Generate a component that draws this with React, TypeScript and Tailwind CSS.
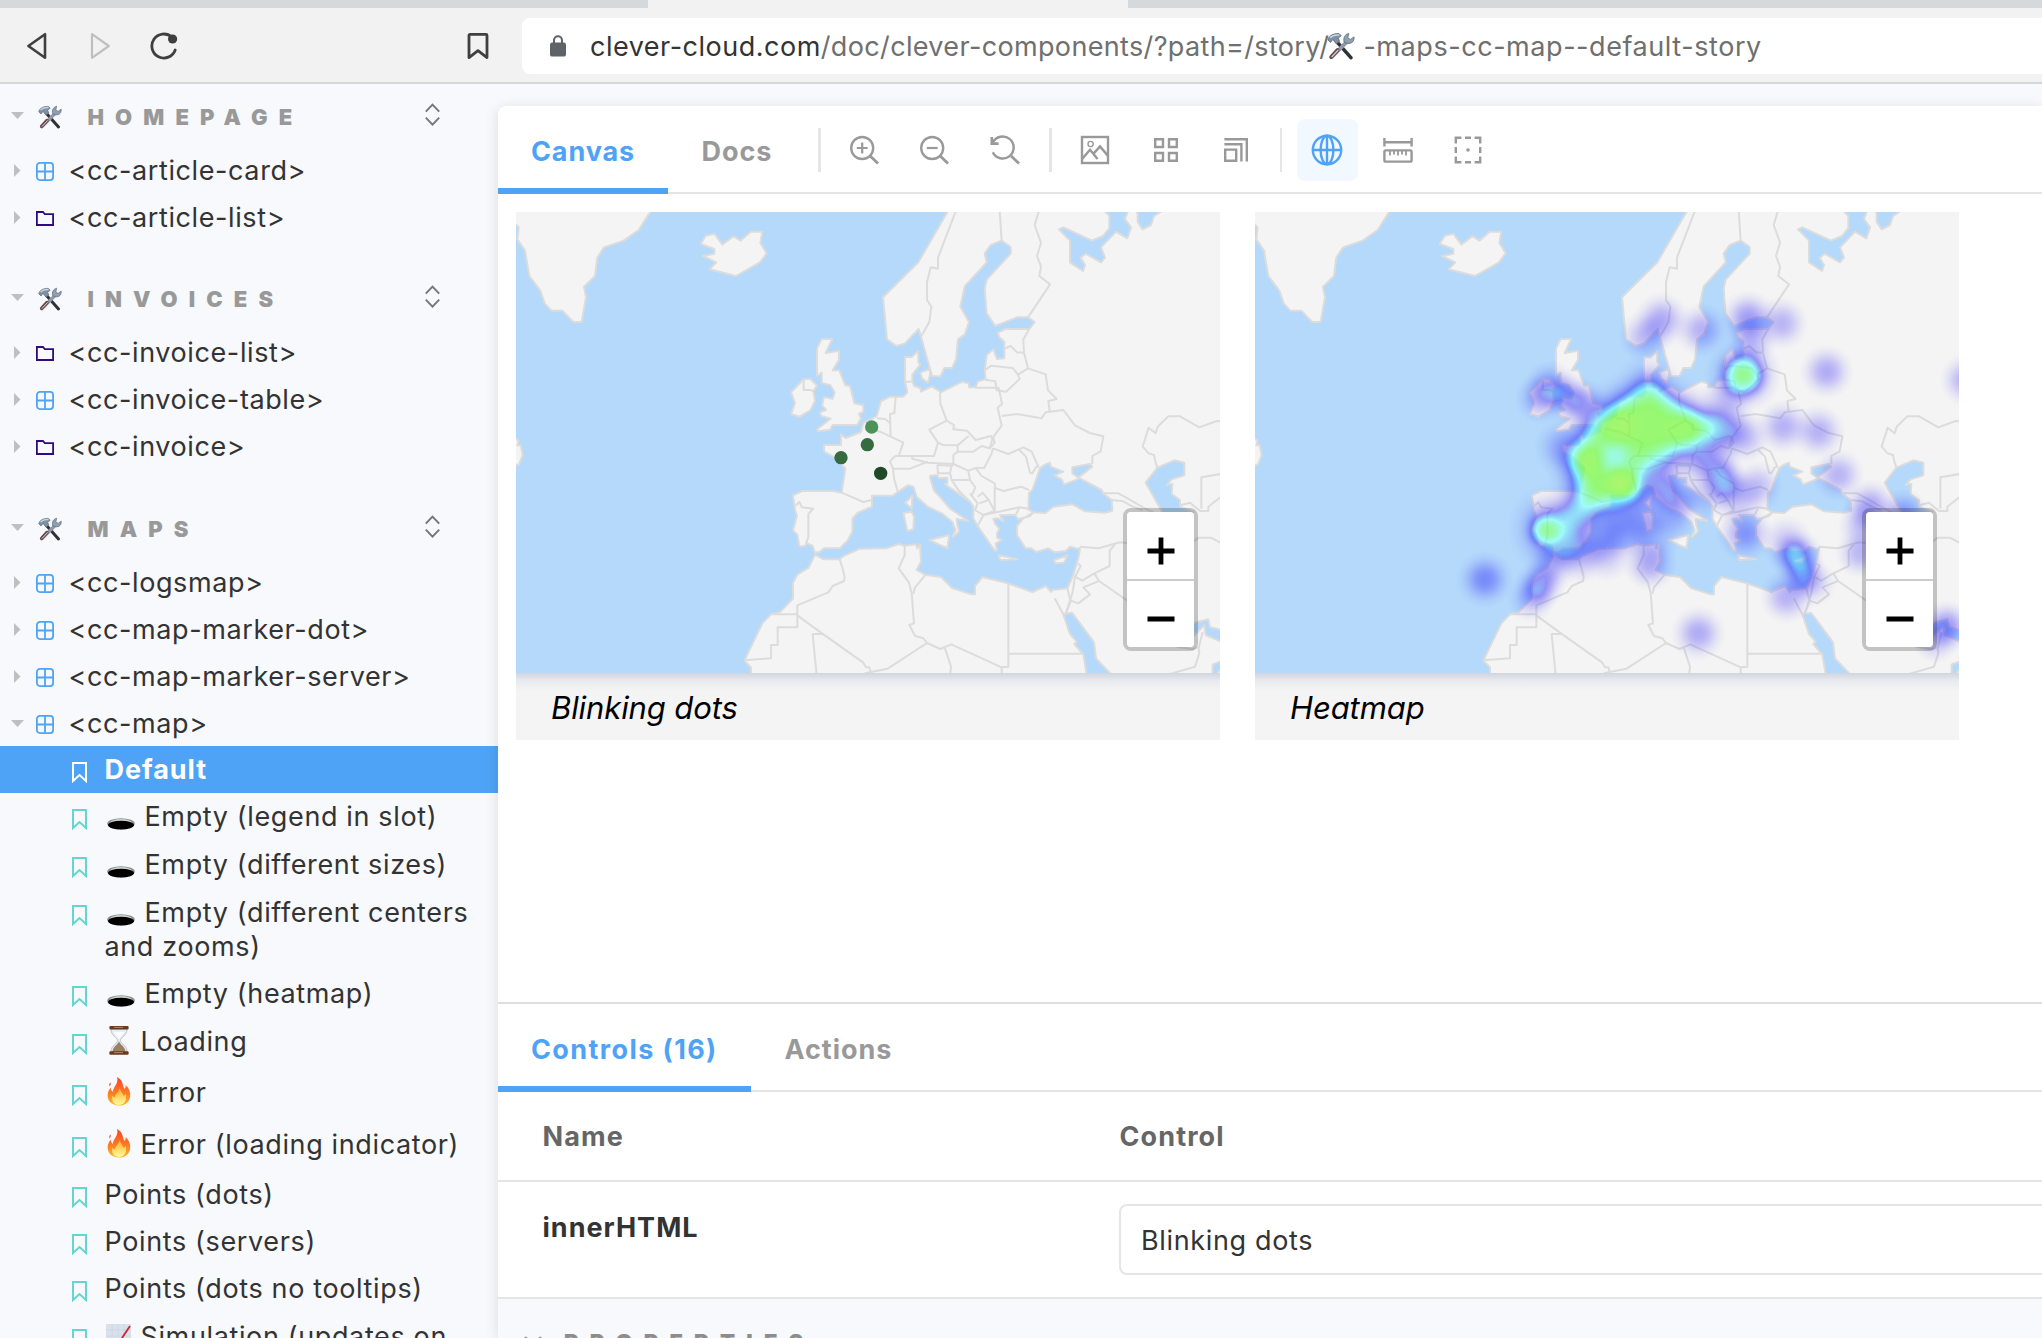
import React from "react";

/* ---------- map data (three units per pixel) ---------- */

const LAND = [
  "-10,-10 -2,36 8,46 4,82 27,116 40,192 73,236 86,274 106,296 139,296 172,330 197,330 210,256 204,224 237,192 244,137 264,106 323,86 368,54 410,-12",
  "554,96 569,71 595,65 619,98 653,72 673,86 704,59 739,59 733,93 752,124 732,151 660,192 580,172 601,151 561,132 595,125 595,111",
  "903,409 917,381 949,381 929,423 969,416 969,444 950,475 970,475 988,520 1002,522 1015,574 1042,580 1042,599 1029,606 1035,619 1024,639 950,639 942,653 907,658 903,652 944,620 915,612 911,601 930,594 918,580 924,555 950,560 956,541 943,520 917,513 917,482 903,492",
  "825,541 863,501 884,501 903,521 892,537 897,566 884,594 851,614 825,607 837,573",
  "-10,675 8,686 4,700 14,699 20,729 8,759 -10,755",
  "1310,-30 1294,0 1207,151 1101,256 1113,382 1141,402 1166,395 1208,351 1215,374 1248,492 1273,493 1285,468 1308,468 1320,442 1326,382 1346,368 1359,330 1333,284 1346,223 1412,151 1406,125 1424,99 1457,86 1484,105 1484,125 1412,203 1406,230 1412,304 1438,342 1503,316 1536,316 1556,330 1540,351 1469,351 1445,362 1450,376 1465,389 1465,439 1443,441 1432,412 1412,429 1406,476 1409,501 1386,508 1378,526 1360,526 1358,514 1339,509 1274,541 1268,536 1248,523 1215,539 1213,528 1195,522 1189,509 1189,488 1213,457 1207,451 1207,417 1187,435 1167,435 1167,509 1174,541 1162,554 1123,554 1095,567 1082,612 1069,620 1048,630 1042,632 1035,660 989,678 975,667 975,699 924,699 924,719 957,737 982,762 988,769 977,842 950,837 858,837 831,850 837,894 843,911 831,955 844,968 850,1003 864,1003 873,994 890,1002 896,1021 910,1021 924,1009 971,1009 996,984 1009,958 1009,921 1024,903 1068,884 1068,851 1130,851 1175,820 1192,824 1202,854 1235,884 1279,905 1309,929 1319,955 1309,974 1314,974 1329,958 1324,939 1322,921 1357,927 1301,889 1273,856 1254,836 1243,800 1242,792 1264,789 1268,799 1294,797 1294,814 1286,816 1297,824 1362,869 1372,884 1372,919 1385,942 1436,1016 1443,1015 1439,994 1457,985 1443,976 1443,964 1450,951 1437,934 1432,921 1445,919 1462,927 1452,910 1496,908 1507,922 1542,912 1552,901 1522,919 1503,942 1503,969 1529,1009 1545,1009 1562,1020 1596,1009 1617,1021 1650,1017 1662,1004 1684,1010 1692,1009 1687,1039 1670,1094 1654,1129 1610,1134 1605,1140 1590,1122 1549,1140 1476,1114 1399,1095 1377,1122 1377,1147 1367,1147 1308,1128 1275,1095 1227,1088 1202,1074 1215,1049 1212,996 1204,1009 1200,997 1167,1001 1148,996 1110,1009 1032,1010 982,1032 971,1042 923,1042 897,1028 878,1067 844,1088 831,1112 831,1160 791,1201 765,1207 739,1234 685,1346 705,1366 705,1400 2140,1400 2140,-30",
  "1213,482 1242,470 1242,490 1235,512 1218,499",
  "1189,851 1187,889 1167,872",
  "1162,903 1187,899 1194,914 1192,952 1174,957",
  "1240,984 1300,969 1294,1008 1275,1000",
  "1449,1030 1504,1042 1452,1044",
  "1615,1044 1655,1030 1644,1052 1618,1054",
];

const SEAS = [
  "1549,834 1572,769 1585,759 1602,752 1604,764 1642,779 1615,790 1637,802 1644,817 1692,799 1757,834 1761,844 1787,864 1789,896 1766,902 1707,898 1670,877 1612,884 1588,903 1552,901 1537,892 1539,843",
  "1669,766 1722,756 1729,764 1687,796 1669,784",
  "1975,745 2005,752 2005,790 1967,802 1952,819 1969,816 1967,846 1992,864 1992,884 2032,900 2000,930 1950,930 1940,902 1889,812 1924,767",
  "1629,52 1642,46 1728,86 1761,72 1780,48 1780,11 1760,-8 1838,-8 1827,21 1845,46 1834,79 1800,59 1755,106 1767,137 1755,151 1709,125 1694,137 1707,159 1701,177 1662,151 1662,86",
  "1860,-8 1865,5 1865,30 1880,52 1905,39 1914,12 1945,-8",
  "1642,1207 1668,1202 1734,1291 1740,1339 1790,1392 1713,1392 1702,1327 1675,1296 1682,1289 1662,1266",
  "2020,1236 2077,1222 2082,1246 2140,1258 2140,1300 2069,1269 2065,1239 2030,1275",
  "2090,1400 2090,1357 2140,1340",
];

const BORDERS = [
  "863,501 863,534 884,534 892,537",
  "1320,-4 1266,137 1266,170 1244,166 1233,210 1233,264 1246,284 1240,330 1215,374",
  "1451,-4 1457,86",
  "1569,-4 1556,39 1575,92 1563,132 1575,164 1570,192 1602,217 1536,316",
  "1540,351 1522,382 1524,422 1536,469 1589,487 1596,535 1622,561 1597,567 1601,598",
  "1465,410 1484,402 1503,421 1524,422",
  "1408,474 1425,461 1490,468 1506,488 1536,469",
  "1506,488 1511,501 1470,539 1442,535 1438,508 1408,503",
  "1378,527 1448,527 1458,576 1445,587 1457,641 1431,676 1436,692",
  "1457,612 1503,606 1576,619 1589,601 1642,594 1677,640 1721,663 1762,673 1754,718 1729,732 1729,756",
  "1272,541 1273,574 1292,626 1314,639 1312,652 1353,656 1379,684 1425,672 1436,692 1421,709",
  "1292,626 1240,653 1266,692 1254,732 1137,732",
  "1266,692 1281,699 1325,700 1358,672",
  "1325,700 1325,719 1372,719 1397,702 1421,709 1431,676",
  "1325,719 1312,729 1312,756 1236,752 1189,740 1187,732",
  "1137,732 1122,749 1131,770 1182,770 1236,749",
  "1131,770 1134,799 1144,834 1146,840",
  "1148,732 1162,692 1124,674 1122,606 1135,604 1139,556",
  "1082,619 1107,621 1124,634",
  "1052,650 1092,659 1124,674",
  "1167,509 1189,509",
  "1431,709 1427,724 1405,767 1379,768 1357,776 1312,756",
  "1431,709 1477,726 1522,706 1547,719 1567,764 1560,766 1549,784 1542,782 1530,734 1510,714",
  "1379,768 1397,792 1436,814 1438,828 1462,837 1515,824 1539,834",
  "1264,759 1266,784 1302,784 1307,759",
  "1264,759 1308,761 1312,756",
  "1302,784 1307,804 1330,838 1362,869",
  "1307,804 1362,804 1357,776",
  "1362,804 1378,826 1370,845 1364,850",
  "1362,844 1385,874 1377,894 1402,909 1385,942",
  "1402,909 1436,897 1436,826",
  "1385,854 1400,842 1418,864 1390,874",
  "1418,864 1436,897",
  "1402,909 1462,896 1510,886 1537,890",
  "1510,886 1500,908",
  "839,881 850,870 858,886 892,890 877,906 877,976 870,994",
  "977,842 1042,870 1068,864",
  "971,1042 978,1063 986,1094 984,1107 950,1122 937,1141 844,1180 844,1207 765,1207",
  "844,1207 844,1246 785,1246 785,1299 765,1299 765,1339 685,1345",
  "844,1210 918,1264 1042,1352 1050,1366 1060,1366 1067,1390",
  "918,1266 890,1266 902,1390",
  "1046,1384 1115,1370 1233,1293 1222,1279 1197,1272 1180,1239 1194,1234 1187,1144 1179,1112 1148,1069 1166,1029 1166,1001",
  "1192,1146 1197,1126 1227,1090",
  "1233,1293 1273,1311 1306,1297 1457,1366 1477,1364 1477,1115",
  "1286,1306 1305,1364 1302,1390",
  "1457,1366 1457,1390",
  "1477,1325 1700,1325",
  "1616,1159 1642,1207",
  "1649,1204 1664,1169 1654,1129",
  "1692,1004 1748,1009 1812,991 1840,994",
  "1797,997 1781,1016 1781,1062 1735,1084 1699,1106 1677,1094",
  "1735,1084 1749,1107 1840,1170",
  "1749,1107 1702,1126 1722,1147 1687,1174 1664,1166",
  "1687,1055 1694,1062 1677,1094 1670,1140 1650,1204",
  "1761,844 1807,844 1840,862 1884,888 1920,905",
  "1787,864 1822,868 1850,884 1880,894",
  "1924,767 1918,749 1914,729 1898,724 1880,704 1898,647 1919,664 1925,644 1957,613 1992,613 2050,646 2102,627 2130,630",
  "2056,890 2056,796 2120,785",
  "1992,880 2022,872 2052,897 2077,897 2077,884 2130,842",
  "2032,989 2048,977 2084,977 2130,1000",
  "2060,1260 2048,1308 2050,1324 2037,1364 1962,1386",
  "1982,1304 2030,1312 2052,1304",
];

const DOTS = [
  { x: 1067, y: 645, c: "#4c935a" },
  { x: 1054, y: 698, c: "#366b40" },
  { x: 975, y: 737, c: "#366b40" },
  { x: 1094, y: 784, c: "#1f4927" },
];

/* x, y, peak intensity, radius */
const HEAT: [number, number, number, number][] = [
  [45, 868, 0.36, 90], [1070, 245, 0.3, 88], [685, 1030, 0.3, 88], [940, 410, 0.28, 88],
  [1045, 425, 0.28, 88], [1105, 555, 0.27, 86], [935, 100, 0.27, 86], [835, 85, 0.35, 90],
  [575, 90, 0.3, 90], [525, 140, 0.25, 86], [695, 120, 0.28, 88], [845, 150, 0.24, 86],
  [820, 255, 0.58, 88], [820, 255, 0.44, 122], [240, 290, 0.3, 84], [210, 325, 0.28, 82],
  [290, 320, 0.32, 84], [340, 345, 0.3, 84], [760, 580, 0.42, 84], [735, 520, 0.32, 88],
  [800, 625, 0.22, 90], [860, 590, 0.24, 86], [680, 520, 0.2, 84], [580, 545, 0.22, 84],
  [580, 605, 0.34, 80], [630, 625, 0.24, 78], [700, 620, 0.16, 84], [290, 765, 0.26, 86],
  [390, 750, 0.3, 90], [470, 735, 0.26, 90], [440, 690, 0.2, 80], [525, 690, 0.26, 82],
  [605, 680, 0.24, 86], [330, 800, 0.26, 86], [210, 885, 0.38, 80], [185, 925, 0.24, 78],
  [245, 825, 0.28, 84], [410, 800, 0.18, 84], [540, 820, 0.31, 88], [550, 750, 0.18, 86],
  [980, 800, 0.48, 84], [1000, 860, 0.34, 80], [950, 755, 0.2, 88], [950, 920, 0.28, 88],
  [1030, 880, 0.14, 80], [1200, 650, 0.32, 88], [1300, 675, 0.32, 84], [1180, 710, 0.24, 84],
  [1170, 790, 0.26, 80], [1430, 1010, 0.37, 84], [1395, 1050, 0.2, 78], [1487, 270, 0.28, 84],
  [825, 730, 0.32, 92], [760, 415, 0.34, 96], [820, 440, 0.26, 88], [770, 330, 0.2, 92],
  [275, 470, 0.22, 90], [225, 722, 0.44, 68], [455, 580, 0.52, 70], [350, 512, 0.34, 72],
  [450, 408, 0.34, 84], [645, 415, 0.22, 80],
];

function BaseMap() {
  return (
    <>
      <rect width="2112" height="1383" fill="#b4d9fb" />
      <g fill="#f4f4f4" stroke="#dcdcdc" strokeWidth="6" strokeLinejoin="round">
        {LAND.map((p, i) => (
          <polygon key={i} points={p} />
        ))}
      </g>
      <g fill="#b4d9fb" stroke="#dcdcdc" strokeWidth="6" strokeLinejoin="round">
        {SEAS.map((p, i) => (
          <polygon key={i} points={p} />
        ))}
      </g>
      <g fill="none" stroke="#dcdcdc" strokeWidth="6" strokeLinejoin="round">
        {BORDERS.map((p, i) => (
          <polyline key={i} points={p} />
        ))}
      </g>
    </>
  );
}

function HeatLayer() {
  return (
    <>
      <defs>
        <radialGradient id="blob">
          <stop offset="0" stopOpacity="1" />
          <stop offset="0.15" stopOpacity="0.96" />
          <stop offset="0.3" stopOpacity="0.83" />
          <stop offset="0.45" stopOpacity="0.62" />
          <stop offset="0.6" stopOpacity="0.37" />
          <stop offset="0.75" stopOpacity="0.16" />
          <stop offset="0.88" stopOpacity="0.05" />
          <stop offset="1" stopOpacity="0" />
        </radialGradient>
        <filter id="soften" filterUnits="userSpaceOnUse" x="0" y="0" width="2112" height="1383">
          <feGaussianBlur stdDeviation="34" />
        </filter>
        <filter
          id="heat"
          filterUnits="userSpaceOnUse"
          x="0"
          y="0"
          width="2112"
          height="1383"
          colorInterpolationFilters="sRGB"
        >
          <feColorMatrix in="SourceGraphic" values="0 0 0 1 0  0 0 0 1 0  0 0 0 1 0  0 0 0 0 1" result="level" />
          <feComponentTransfer in="level" result="colour">
            <feFuncR type="table" tableValues="0.1 0.1 0.1 0.1 0.08 0.14 0.4 0.42 0.43 0.56 0.8" />
            <feFuncG type="table" tableValues="0.05 0.05 0.05 0.05 0.07 0.6 1 0.99 0.98 0.97 0.95" />
            <feFuncB type="table" tableValues="0.97 0.97 0.97 0.97 0.98 0.98 1 0.6 0.24 0.22 0.2" />
          </feComponentTransfer>
          <feComponentTransfer in="SourceGraphic" result="mask">
            <feFuncA type="table" tableValues="0 0.09 0.19 0.31 0.44 0.5 0.6 0.68 0.71 0.72 0.74" />
          </feComponentTransfer>
          <feComposite in="colour" in2="mask" operator="in" />
        </filter>
      </defs>
      <g filter="url(#heat)">
        <g filter="url(#soften)">
          <g transform="translate(645 234)" fillRule="evenodd">
            <path
              fillOpacity="0.82"
              d="M538 240L585 305L645 345L710 370L740 390L750 420L735 450L700 472L640 490L570 514L520 545L530 590L520 632L480 650L420 645L370 640L318 610L312 575L288 520L288 490L325 455L340 415L380 368L430 332L490 298ZM435 476L457 486L460 505L447 522L424 522L411 505L414 486Z"
            />
            <path fillOpacity="0.62" d="M325 600L430 640L415 655L365 690L330 735L285 755L245 790L200 780L178 735L182 675L215 655L275 655Z" />
          </g>
        </g>
        <g transform="translate(645 234)">
          {HEAT.map(([x, y, o, r], i) => (
            <circle key={i} cx={x} cy={y} r={r} opacity={o} fill="url(#blob)" />
          ))}
        </g>
      </g>
    </>
  );
}

function MapCard({ caption, heat }: { caption: string; heat?: boolean }) {
  return (
    <figure className="relative w-[704px]">
      <svg className="block h-[461px] w-[704px]" viewBox="0 0 2112 1383">
        <BaseMap />
        {heat ? (
          <HeatLayer />
        ) : (
          DOTS.map((d, i) => <circle key={i} cx={d.x} cy={d.y} r="20" fill={d.c} />)
        )}
      </svg>
      <div className="absolute top-[296px] left-[607px] h-[143px] w-[75px] rounded-lg border-4 border-black/20">
        <div className="flex h-[69px] items-center justify-center rounded-t-[4px] border-b-2 border-[#ccc] bg-white pt-[11px]">
          <svg className="size-7" viewBox="0 0 28 28" stroke="#000" strokeWidth="4.8">
            <path d="M.5 14H27.5M14 .5V27.5" />
          </svg>
        </div>
        <div className="flex h-[66px] items-center justify-center rounded-b-[4px] bg-white pt-2">
          <svg className="size-7" viewBox="0 0 28 28" stroke="#000" strokeWidth="5">
            <path d="M.5 15H27.5" />
          </svg>
        </div>
      </div>
      <figcaption className="h-[67px] bg-[#f4f4f4] bg-linear-to-b from-[#d0d5df] via-[#e9ebef] via-[8px] to-[#f4f4f4] to-[18px] pl-[35px] text-[31px] leading-[70px] tracking-[-0.1px] text-black italic">
        {caption}
      </figcaption>
    </figure>
  );
}

/* ---------- emoji drawings ---------- */

function Tools({ className }: { className: string }) {
  return (
    <svg className={className} viewBox="0 0 24 24" fill="none">
      <path d="M8.5 8.5L20.5 22" stroke="#2e3136" strokeWidth="3" strokeLinecap="round" />
      <path d="M17 8.5L4 21.5" stroke="#8d99a6" strokeWidth="3.2" strokeLinecap="round" />
      <path d="M9 15.5L3.6 21.4" stroke="#6b4a4e" strokeWidth="3.4" strokeLinecap="round" />
      <path d="M9.5 15.6L4.2 21.2" stroke="#cfd6dd" strokeWidth="1" strokeLinecap="round" />
      <path d="M.8 6.8C1.4 3.6 4.6 1.2 10.4 1.4L12.2 3.2L9.6 5.2L10.8 8L8 10.2L5 6.4L3 9Z" fill="#7e90a2" stroke="#5f6b78" strokeWidth=".7" />
      <path d="M2.6 5C4.6 2.8 7.4 2.2 10.6 2.6" stroke="#c6d6e4" strokeWidth="1.3" />
      <path d="M18.6 1.2L17.8 5L20 6.4L23.2 4.2C23.6 7.6 21.4 10.2 17.6 9.8L14.6 8.6C13.8 4.8 15.4 2 18.6 1.2Z" fill="#8fa0b1" stroke="#5f6b78" strokeWidth=".7" />
    </svg>
  );
}

function Hole() {
  return (
    <svg className="mr-[9.5px] ml-[2.5px] inline-block h-3 w-7 translate-y-1 align-baseline" viewBox="0 0 28 12">
      <ellipse cx="14" cy="5.8" rx="13.8" ry="5.6" fill="#8e8e8e" />
      <ellipse cx="14" cy="5" rx="11" ry="4" fill="#d0d0d0" />
      <ellipse cx="14" cy="7.1" rx="13" ry="4.3" fill="#000" />
    </svg>
  );
}

function Hourglass() {
  return (
    <svg className="mr-[11.5px] ml-[4.5px] inline-block h-[29px] w-5 align-[-4px]" viewBox="0 0 20 29">
      <path d="M2 3C2 10 8.5 11 8.5 14.5S2 19 2 26H18C18 19 11.5 18 11.5 14.5S18 10 18 3Z" fill="#e9eef3" stroke="#b9c0c8" strokeWidth="1" />
      <path d="M10 15C9 19 4 20 3.4 26H16.6C16 20 11 19 10 15Z" fill="#9b8064" />
      <path d="M5 6C6 10 9 11 10 13.5C11 11 14 10 15 6Z" fill="#fff" />
      <rect x=".4" y="0" width="19.2" height="3.6" rx="1" fill="#6b3a22" />
      <rect x=".4" y="25.2" width="19.2" height="3.6" rx="1" fill="#6b3a22" />
      <path d="M5 1.4H14M5 26.6H14" stroke="#b98a6a" strokeWidth=".9" />
    </svg>
  );
}

function Fire() {
  return (
    <svg className="mr-[9.5px] ml-[2.5px] inline-block h-[29px] w-6 align-[-4px]" viewBox="0 0 24 29">
      <defs>
        <linearGradient id="flame" x1="0" y1="0" x2="0" y2="1">
          <stop offset="0" stopColor="#f9432b" />
          <stop offset=".55" stopColor="#fc7a22" />
          <stop offset="1" stopColor="#fdbb2d" />
        </linearGradient>
        <linearGradient id="core" x1="0" y1="0" x2="0" y2="1">
          <stop offset="0" stopColor="#fdb02c" />
          <stop offset="1" stopColor="#fffb9c" />
        </linearGradient>
      </defs>
      <path d="M10 0C16 3 15 7 17.5 12C18.5 11 19 9.5 18.6 8C22 11 23.6 15.5 23.2 19C22.8 25 18 28.6 12 28.6S.6 25 .6 18.6C.6 15 2.4 12.6 3.6 10.6C3.8 12.6 4.4 14 5.6 15C6.6 9 12 6.5 10 0Z" fill="url(#flame)" />
      <path d="M3.6 5.4C4 7 3.4 8.2 2.4 9.2C1.8 7.6 2.4 6.4 3.6 5.4Z" fill="#f9432b" />
      <path d="M12.4 11C14 15 16 16 16.4 19C17.6 18.6 18 17.6 18.4 16.6C20.6 22 18 28 12 28S4.2 23.4 5.6 18.6C6.4 19.8 7 20.4 8 20.6C8.2 16.6 12 15.6 12.4 11Z" fill="url(#core)" />
    </svg>
  );
}

function Chart() {
  return (
    <svg className="mr-[9.5px] ml-[1.5px] inline-block h-[26px] w-[25px] align-[-4px]" viewBox="0 0 25 26">
      <rect width="25" height="26" fill="#d9e2ec" />
      <path d="M0 6H25M0 12H25M0 18H25M6 0V26M12 0V26M18 0V26" stroke="#cbd7e2" strokeWidth=".8" />
      <path d="M1 24L6 20L9 23L16 14L24 2" fill="none" stroke="#d4232b" strokeWidth="1.8" />
    </svg>
  );
}

/* ---------- sidebar ---------- */

function Caret({ open }: { open?: boolean }) {
  return open ? (
    <svg className="h-[7px] w-[13px]" viewBox="0 0 13 7">
      <path d="M0 0H13L6.5 7Z" fill="#bfbfbf" />
    </svg>
  ) : (
    <svg className="h-[13px] w-[7px]" viewBox="0 0 7 13">
      <path d="M0 0V13L6.5 6.5Z" fill="#bfbfbf" />
    </svg>
  );
}

function Heading({ children, className }: { children: string; className: string }) {
  return (
    <div className={`shrink-0 ${className}`}>
      <div className="flex h-[59px] items-center pl-[11px]">
        <div className="mb-[3px] w-[27px]">
          <Caret open />
        </div>
        <Tools className="size-6" />
        <h3 className="ml-[25.5px] flex-1 pt-px text-[22px] font-black tracking-[11.1px] text-[#999]">{children}</h3>
        <svg className="mr-[58.5px] mb-[5px] h-[23px] w-[15px]" viewBox="0 0 15 23" fill="none" stroke="#777" strokeWidth="2">
          <path d="M.8 8.6L7.5 1.6L14.2 8.6M.8 14.6L7.5 21.6L14.2 14.6" />
        </svg>
      </div>
    </div>
  );
}

function Component({ name, folder, open }: { name: string; folder?: boolean; open?: boolean }) {
  return (
    <div className="flex h-[47px] shrink-0 items-center">
      <div className={open ? "mt-0.5 ml-[11px] w-[25px]" : "mt-0.5 ml-[14px] w-[22px]"}>
        <Caret open={open} />
      </div>
      {folder ? (
        <svg className="mt-1 h-[15px] w-[18px]" viewBox="0 0 18 15" fill="none" stroke="#2f0c7e" strokeWidth="1.8">
          <path d="M.9 1H7L8.8 3.2H17.1V14H.9Z" />
        </svg>
      ) : (
        <svg className="mt-[3px] h-[19px] w-[18px]" viewBox="0 0 18 19" fill="none" stroke="#4ea5f7" strokeWidth="1.8">
          <rect x=".9" y=".9" width="16.2" height="17.2" rx="3" />
          <path d="M9 1V18M1 9.5H17" />
        </svg>
      )}
      <span className="ml-[14.5px] pt-[1.5px] text-[27px] leading-none tracking-[0.6px] text-[#333]">{name}</span>
    </div>
  );
}

function Story({ h, children, active }: { h: string; children: React.ReactNode; active?: boolean }) {
  return (
    <div className={`flex shrink-0 items-start pl-[72px] ${h} ${active ? "bg-[#4fa3f6]" : ""}`}>
      <svg
        className="mt-[15.5px] h-[21px] w-[15px] shrink-0"
        viewBox="0 0 15 21"
        fill="none"
        stroke={active ? "#fff" : "#66d4d1"}
        strokeWidth="2"
      >
        <path d="M1 1H14V19L7.5 13L1 19Z" />
      </svg>
      <div
        className={`ml-[17.5px] pt-[7px] text-[27px] leading-[34px] whitespace-nowrap ${
          active ? "font-bold tracking-[0.95px] text-white" : "tracking-[0.63px] text-[#333]"
        }`}
      >
        {children}
      </div>
    </div>
  );
}

function Sidebar() {
  return (
    <nav className="flex h-[1254px] w-[498px] shrink-0 flex-col overflow-hidden">
      <Heading className="pt-[3px]">HOMEPAGE</Heading>
      <Component name="<cc-article-card>" />
      <Component name="<cc-article-list>" folder />
      <Heading className="pt-[29px]">INVOICES</Heading>
      <Component name="<cc-invoice-list>" folder />
      <Component name="<cc-invoice-table>" />
      <Component name="<cc-invoice>" folder />
      <Heading className="pt-[30px]">MAPS</Heading>
      <Component name="<cc-logsmap>" />
      <Component name="<cc-map-marker-dot>" />
      <Component name="<cc-map-marker-server>" />
      <Component name="<cc-map>" open />
      <Story h="h-[47px]" active>
        Default
      </Story>
      <Story h="h-[48px]">
        <Hole />
        Empty (legend in slot)
      </Story>
      <Story h="h-[48px]">
        <Hole />
        Empty (different sizes)
      </Story>
      <Story h="h-[81px]">
        <Hole />
        Empty (different centers
        <br />
        and zooms)
      </Story>
      <Story h="h-[48px]">
        <Hole />
        Empty (heatmap)
      </Story>
      <Story h="h-[51px]">
        <Hourglass />
        Loading
      </Story>
      <Story h="h-[52px]">
        <Fire />
        Error
      </Story>
      <Story h="h-[50px]">
        <Fire />
        Error (loading indicator)
      </Story>
      <Story h="h-[47px]">Points (dots)</Story>
      <Story h="h-[47px]">Points (servers)</Story>
      <Story h="h-[48px]">Points (dots no tooltips)</Story>
      <Story h="h-[48px]">
        <Chart />
        Simulation (updates on
      </Story>
    </nav>
  );
}

/* ---------- browser chrome ---------- */

function BrowserBar() {
  return (
    <header className="bg-[#f2f2f2]">
      <div className="flex h-2 justify-between">
        <div className="w-[648px] bg-[#d5d9dc]" />
        <div className="w-[914px] bg-[#d5d9dc]" />
      </div>
      <div className="flex h-[76px] items-start border-b-2 border-[#d3d6da] pt-2.5">
        <div className="flex h-14 w-[522px] items-center pl-[26px]">
          <svg className="h-7 w-[22px]" viewBox="0 0 22 28" fill="none" stroke="#3f3f3f" strokeWidth="2.6" strokeLinejoin="round">
            <path d="M19 2.2V25.8L2.4 14Z" />
          </svg>
          <svg className="ml-[42px] h-7 w-[22px]" viewBox="0 0 22 28" fill="none" stroke="#bfbfbf" strokeWidth="2.2" strokeLinejoin="round">
            <path d="M2 2.2V25.8L18.8 14Z" />
          </svg>
          <svg className="ml-[37px] h-7 w-[30px]" viewBox="0 0 30 28" fill="none" stroke="#3f3f3f" strokeWidth="2.8" strokeLinecap="round">
            <path d="M26.2 18A12 12 0 1 1 22.8 5" />
            <circle cx="23.6" cy="7" r="4.6" fill="#3f3f3f" stroke="none" />
          </svg>
          <svg className="ml-[288px] h-7 w-[22px]" viewBox="0 0 22 28" fill="none" stroke="#3f3f3f" strokeWidth="2.8" strokeLinejoin="round">
            <path d="M2 3.4Q2 2.4 3 2.4H19Q20 2.4 20 3.4V25.6L11 18.6L2 25.6Z" />
          </svg>
        </div>
        <div className="flex h-14 flex-1 items-center rounded-l-lg bg-white pl-7">
          <svg className="h-[22px] w-4" viewBox="0 0 16 22">
            <path d="M4 9V5.2a4 4 0 0 1 8 0V9" fill="none" stroke="#5f6368" strokeWidth="2.1" />
            <rect y="7.6" width="16" height="14" rx="2.2" fill="#5f6368" />
          </svg>
          <div className="ml-6 flex items-center text-[27px] leading-none tracking-[0.4px] text-[#6f6f6f]">
            <span className="tracking-[0.5px] text-[#333]">clever-cloud.com</span>
            <span className="tracking-[0.35px]">/doc/clever-components/?path=/story/</span>
            <Tools className="-ml-0.5 size-7" />
            <span className="ml-[8px] tracking-[0.56px]">-maps-cc-map--default-story</span>
          </div>
        </div>
      </div>
    </header>
  );
}

/* ---------- toolbar ---------- */

function Icon({ children, active }: { children: React.ReactNode; active?: boolean }) {
  return (
    <div
      className={
        active
          ? "flex h-[62px] w-[61px] items-center justify-center rounded-lg bg-[#f1f8ff] text-[#4fa3f6]"
          : "flex h-[62px] w-[61px] items-center justify-center text-[#999]"
      }
    >
      <svg className="size-8" viewBox="0 0 32 32" fill="none" stroke="currentColor" strokeWidth="2.4">
        {children}
      </svg>
    </div>
  );
}

function Toolbar() {
  return (
    <div className="flex h-[88px] items-start border-b-2 border-[#e5e5e5]">
      <div className="h-[88px] w-[170px] border-b-6 border-[#4fa3f6] pl-[33px] text-[27px] leading-[91px] font-bold tracking-[0.9px] text-[#4fa3f6]">
        Canvas
      </div>
      <div className="w-[150px] pl-[33.5px] text-[27px] leading-[91px] font-bold tracking-[0.95px] text-[#999]">Docs</div>
      <div className="flex h-[88px] items-center gap-[9.5px]">
        <div className="mr-[2.5px] h-11 w-[3px] bg-[#e5e5e5]" />
        <Icon>
          <circle cx="14.2" cy="14" r="11" />
          <path d="M22.2 22L30 29.6" strokeWidth="2.8" />
          <path d="M14.2 8.6V19.4M8.8 14H19.6" strokeWidth="2.2" />
        </Icon>
        <Icon>
          <circle cx="14.2" cy="14" r="11" />
          <path d="M22.2 22L30 29.6" strokeWidth="2.8" />
          <path d="M8.8 14H19.6" strokeWidth="2.2" />
        </Icon>
        <Icon>
          <path d="M3.8 8.6A11 11 0 1 1 3.8 18.4" />
          <path d="M22.2 22L30 29.6" strokeWidth="2.8" />
          <path d="M2.8 3V9.6H9.6" strokeWidth="2.6" />
        </Icon>
        <div className="mr-[3.5px] ml-[4px] h-11 w-[3px] bg-[#e5e5e5]" />
        <Icon>
          <rect x="3" y="3" width="26" height="26" />
          <circle cx="11.6" cy="10" r="2.6" strokeWidth="1.4" />
          <path d="M3.4 24.6L11 15.8L18.6 25M14.8 19.4L21 12.4L28.8 21.6" />
        </Icon>
        <Icon>
          <path d="M5.2 5.2H13V13H5.2ZM19 5.2H26.8V13H19ZM5.2 19H13V26.8H5.2ZM19 19H26.8V26.8H19Z" />
        </Icon>
        <Icon>
          <path d="M5.2 15.6H16.2V26.8H5.2ZM4.4 10.2H21.4V27.6M4.4 5.2H26.8V27.6" />
        </Icon>
        <div className="mr-[5px] ml-[4px] h-11 w-[2px] bg-[#e5e5e5]" />
        <Icon active>
          <circle cx="16" cy="16" r="14.2" strokeWidth="2.4" />
          <ellipse cx="16" cy="16" rx="6.4" ry="14.2" />
          <path d="M2 16H30M16 2V30" />
        </Icon>
        <Icon>
          <path d="M2.4 4V12.4M29.6 4V12.4M2.4 8.2H29.6" />
          <rect x="2.4" y="16.4" width="27.2" height="11.2" rx="1.4" />
          <path d="M8 17V21.6M12 17V20.4M16 17V21.6M20 17V20.4M24 17V21.6" strokeWidth="1.8" />
        </Icon>
        <Icon>
          <path d="M3.8 9.4V3.8H9.4M13 3.8H19M22.6 3.8H28.2V9.4M28.2 13V19M28.2 22.6V28.2H22.6M19 28.2H13M9.4 28.2H3.8V22.6M3.8 19V13" />
          <circle cx="16" cy="16" r="1.8" fill="currentColor" stroke="none" />
        </Icon>
      </div>
    </div>
  );
}

function ControlsPanel() {
  return (
    <section className="h-[336px] overflow-hidden border-t-2 border-[#dedede] text-[27px]">
      <div className="flex h-[88px] items-start border-b-2 border-[#e5e5e5] font-bold">
        <div className="h-[88px] w-[253px] border-b-6 border-[#4fa3f6] pl-[33px] leading-[91px] tracking-[1.4px] text-[#4fa3f6]">
          Controls (16)
        </div>
        <div className="pl-[33.5px] leading-[91px] tracking-[0.95px] text-[#999]">Actions</div>
      </div>
      <div className="flex h-[90px] items-center border-b-2 border-[#e5e5e5] pt-0.5 pl-[44.5px] font-bold tracking-[1.1px] text-[#666]">
        <div className="w-[577px]">Name</div>
        <div>Control</div>
      </div>
      <div className="flex h-[117px] items-start border-b-2 border-[#e5e5e5] pl-[44.5px] text-[#333]">
        <div className="w-[576.5px] pt-[26px] font-bold tracking-[1px]">innerHTML</div>
        <div className="mt-[22px] h-[71px] flex-1 rounded-l-lg border-2 border-r-0 border-[#e5e5e5] pl-5 leading-[69px] tracking-[0.65px]">
          Blinking dots
        </div>
      </div>
      <div className="flex h-[76px] items-start bg-[#f7f9fd] pl-[25px]">
        <svg className="mt-[37px] h-3 w-5" viewBox="0 0 20 12" fill="none" stroke="#999" strokeWidth="2.4">
          <path d="M2 1L10 9L18 1" />
        </svg>
        <h3 className="ml-[21px] pt-[28px] text-[22px] leading-[30px] font-black tracking-[11.2px] text-[#8d8d8d]">PROPERTIES</h3>
      </div>
    </section>
  );
}

export default function App() {
  return (
    <div className="h-[1338px] w-[2042px] overflow-hidden bg-[#f7f9fd] font-['Inter','Liberation_Sans',sans-serif]">
      <BrowserBar />
      <div className="flex">
        <Sidebar />
        <main className="mt-[22px] flex h-[1232px] flex-1 flex-col rounded-tl-lg bg-white shadow-[0_2px_14px_rgba(0,0,0,0.12)]">
          <Toolbar />
          <div className="flex h-[808px] items-start gap-[35px] pt-[18px] pl-[18px]">
            <MapCard caption="Blinking dots" />
            <MapCard caption="Heatmap" heat />
          </div>
          <ControlsPanel />
        </main>
      </div>
    </div>
  );
}
